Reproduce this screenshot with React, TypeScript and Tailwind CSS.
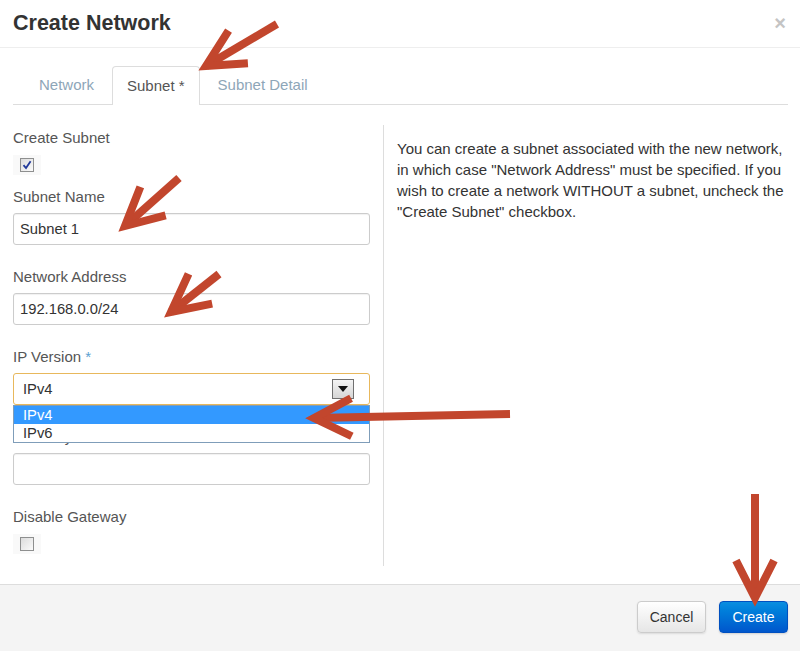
import React from "react";

const font = { fontFamily: '"Liberation Sans", Arial, sans-serif' };

function Checkbox({ checked }: { checked?: boolean }) {
  return (
    <div className="flex h-[20px] w-[28px] items-center justify-center bg-[#f9f9f9]">
      <div className="flex h-[14px] w-[14px] items-center justify-center border border-[#8e8f8f] bg-gradient-to-br from-[#dcdcdc] to-[#fbfbfb]">
        {checked && (
          <svg width="10" height="10" viewBox="0 0 10 10">
            <path d="M1.5 5.2 L4 8 L8.6 1.2" fill="none" stroke="#21399a" strokeWidth="1.8" />
          </svg>
        )}
      </div>
    </div>
  );
}

function Label({ children, className = "" }: { children: React.ReactNode; className?: string }) {
  return <div className={`h-[20px] text-[15px] leading-[20px] text-[#555] ${className}`}>{children}</div>;
}

function TextInput({ value }: { value?: string }) {
  return (
    <div className="flex h-[32px] w-full items-center rounded-[3px] border border-[#ccc] px-[6px] text-[14.75px] text-[#333] shadow-[inset_0_1px_1px_rgba(0,0,0,0.06)]">
      {value}
    </div>
  );
}

function Arrow({ x1, y1, x2, y2 }: { x1: number; y1: number; x2: number; y2: number }) {
  const a = Math.atan2(y2 - y1, x2 - x1);
  const len = 42;
  const spread = 0.47;
  const w1 = [x2 - len * Math.cos(a - spread), y2 - len * Math.sin(a - spread)];
  const w2 = [x2 - len * Math.cos(a + spread), y2 - len * Math.sin(a + spread)];
  return (
    <g stroke="#c2462d" strokeWidth="8" fill="none" strokeLinecap="butt" strokeLinejoin="miter">
      <line x1={x1} y1={y1} x2={x2} y2={y2} />
      <polyline points={`${w1[0]},${w1[1]} ${x2},${y2} ${w2[0]},${w2[1]}`} />
    </g>
  );
}

export default function App() {
  return (
    <div className="relative flex h-[651px] w-[800px] flex-col overflow-hidden bg-white" style={font}>
      {/* Header */}
      <div className="flex h-[48px] shrink-0 items-center justify-between border-b border-[#eee] pl-[13px] pr-[14px]">
        <h3 className="text-[21.5px] font-bold text-[#333]">Create Network</h3>
        <span className="mb-[2px] text-[20px] font-bold leading-none text-[#c4c4c4]">×</span>
      </div>

      {/* Body */}
      <div className="flex-1 px-[12px] pl-[13px]">
        {/* Tabs */}
        <div className="mt-[18px] flex h-[39px] border-b border-[#ddd] pl-[12px] text-[15px]">
          <div className="flex h-[38px] items-center px-[14px] text-[#8ea6b8]">Network</div>
          <div className="ml-[4px] flex h-[39px] items-center rounded-t-[4px] border border-b-0 border-[#ddd] bg-white px-[14px] text-[#555]">
            Subnet *
          </div>
          <div className="flex h-[38px] items-center px-[18px] text-[#8ea6b8]">Subnet Detail</div>
        </div>

        <div className="mt-[20px] flex">
          {/* Left column */}
          <div className="w-[357px] pt-[3px]">
            <Label>Create Subnet</Label>
            <div className="mt-[7px]">
              <Checkbox checked />
            </div>
            <Label className="mt-[12px]">Subnet Name</Label>
            <div className="mt-[6px]">
              <TextInput value="Subnet 1" />
            </div>
            <Label className="mt-[22px]">Network Address</Label>
            <div className="mt-[6px]">
              <TextInput value="192.168.0.0/24" />
            </div>
            <Label className="mt-[22px]">
              IP Version <span className="text-[#5aa0d0]">*</span>
            </Label>
            <div className="relative mt-[6px]">
              <div className="flex h-[32px] w-full items-center justify-between rounded-[3px] border border-[#e8b85c] pl-[9px] pr-[15px] text-[14.75px] text-[#333]">
                <span>IPv4</span>
                <div className="flex h-[20px] w-[22px] items-center justify-center border border-[#707070] bg-gradient-to-b from-[#f4f4f4] to-[#d6d6d6]">
                  <svg width="10" height="6" viewBox="0 0 10 6">
                    <path d="M0 0 H10 L5 6 Z" fill="#111" />
                  </svg>
                </div>
              </div>
              {/* open dropdown */}
              <div className="absolute left-0 top-[32px] z-10 w-full border border-[#7f9db9] bg-white text-[14.75px] leading-[18px]">
                <div className="bg-[#3399ff] pl-[9px] text-white">IPv4</div>
                <div className="pl-[9px] text-[#333]">IPv6</div>
              </div>
            </div>
            <Label className="mt-[22px]">Gateway IP</Label>
            <div className="mt-[6px]">
              <TextInput />
            </div>
            <Label className="mt-[22px]">Disable Gateway</Label>
            <div className="mt-[7px]">
              <Checkbox />
            </div>
            <div className="h-[12px]" />
          </div>

          {/* Divider + help */}
          <div className="ml-[13px] flex-1 whitespace-nowrap border-l border-[#ddd] pl-[13px] pt-[13px] text-[15px] leading-[21px] text-[#333]">
            You can create a subnet associated with the new network,
            <br />
            in which case "Network Address" must be specified. If you
            <br />
            wish to create a network WITHOUT a subnet, uncheck the
            <br />
            "Create Subnet" checkbox.
          </div>
        </div>
      </div>

      {/* Footer */}
      <div className="flex h-[67px] shrink-0 items-start justify-end gap-[13px] border-t border-[#ddd] bg-[#f4f4f4] pr-[12px] pt-[16px]">
        <button className="h-[32px] w-[69px] rounded-[4px] border border-[#ccc] bg-gradient-to-b from-white to-[#e6e6e6] text-[14px] text-[#333] shadow-[0_1px_2px_rgba(0,0,0,0.1)]">
          Cancel
        </button>
        <button className="h-[32px] w-[69px] rounded-[4px] border border-[#0050c0] bg-gradient-to-b from-[#0a8ee0] to-[#0056cc] text-[14px] text-white shadow-[0_1px_2px_rgba(0,0,0,0.15)]">
          Create
        </button>
      </div>

      {/* Annotation arrows */}
      <svg className="pointer-events-none absolute inset-0 z-20" width="800" height="651">
        <Arrow x1={277} y1={24} x2={206} y2={66} />
        <Arrow x1={179} y1={178} x2={125} y2={226} />
        <Arrow x1={219} y1={274} x2={171} y2={312} />
        <Arrow x1={510} y1={414} x2={314} y2={418} />
        <Arrow x1={755} y1={494} x2={755} y2={598} />
      </svg>
    </div>
  );
}
